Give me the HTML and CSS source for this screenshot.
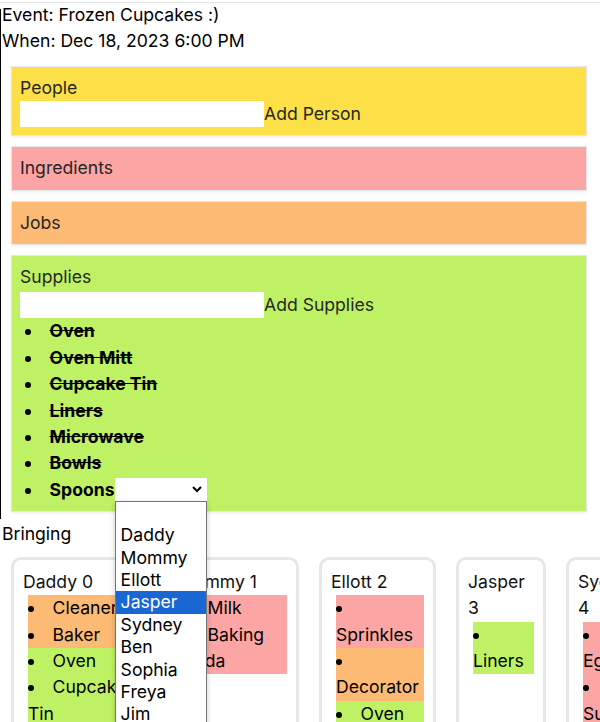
FILE: index.html
```html
<!DOCTYPE html>
<html lang="en">
<head>
<meta charset="utf-8">
<title>Frozen Cupcakes</title>
<link rel="stylesheet" href="styles.css">
</head>
<body>
<div class="topline"></div>
<main class="app">
  <div class="event">
    <div>Event: Frozen Cupcakes :)</div>
    <div>When: Dec 18, 2023 6:00 PM</div>
  </div>

  <div class="panels">
    <section class="panel people">
      <div class="panel-title">People</div>
      <div class="add-row"><input class="text-input" type="text"><button class="add-btn">Add Person</button></div>
    </section>
    <section class="panel ingredients">
      <div class="panel-title">Ingredients</div>
    </section>
    <section class="panel jobs">
      <div class="panel-title">Jobs</div>
    </section>
    <section class="panel supplies">
      <div class="panel-title">Supplies</div>
      <div class="add-row add-row-spaced"><input class="text-input" type="text"><button class="add-btn">Add Supplies</button></div>
      <ul class="supply-list">
        <li class="done">Oven</li>
        <li class="done">Oven Mitt</li>
        <li class="done">Cupcake Tin</li>
        <li class="done">Liners</li>
        <li class="done">Microwave</li>
        <li class="done">Bowls</li>
        <li>Spoons<span class="select"><svg class="chev" width="10" height="7" viewBox="0 0 10 7"><polyline points="1,1 5,5 9,1" fill="none" stroke="#000" stroke-width="2"/></svg><div class="popup">
            <div class="opt"></div>
            <div class="opt">Daddy</div>
            <div class="opt">Mommy</div>
            <div class="opt">Ellott</div>
            <div class="opt active">Jasper</div>
            <div class="opt">Sydney</div>
            <div class="opt">Ben</div>
            <div class="opt">Sophia</div>
            <div class="opt">Freya</div>
            <div class="opt">Jim</div>
          </div></span></li>
      </ul>
    </section>
  </div>

  <div class="bringing">Bringing</div>

  <div class="people-row">
    <div class="person">
      <div class="person-name">Daddy 0</div>
      <ul class="items">
        <li class="job">Cleaner</li>
        <li class="job">Baker</li>
        <li class="supply">Oven</li>
        <li class="supply">Cupcake Tin</li>
      </ul>
    </div>
    <div class="person">
      <div class="person-name">Mommy 1</div>
      <ul class="items">
        <li class="ingredient">Milk</li>
        <li class="ingredient">Baking Soda</li>
      </ul>
    </div>
    <div class="person">
      <div class="person-name">Ellott 2</div>
      <ul class="items">
        <li class="ingredient">Sprinkles</li>
        <li class="job">Decorator</li>
        <li class="supply">Oven</li>
      </ul>
    </div>
    <div class="person">
      <div class="person-name">Jasper 3</div>
      <ul class="items">
        <li class="supply">Liners</li>
      </ul>
    </div>
    <div class="person">
      <div class="person-name">Sydney 4</div>
      <ul class="items">
        <li class="ingredient">Eggs</li>
        <li class="ingredient">Sugar</li>
      </ul>
    </div>
  </div>
</main>
</body>
</html>
```

FILE: styles.css
```css
html, body {
  margin: 0;
  padding: 0;
  background: #fff;
}
body {
  font-family: Inter, "Noto Sans", sans-serif;
  font-size: 17.6px;
  line-height: 26.4px;
  color: #000;
  overflow: hidden;
}
.topline {
  margin-top: 2px;
  height: 1px;
  background: #e3e3e3;
}
.app {
  position: relative;
  padding-left: 2px;
}
.app::before {
  content: "";
  position: absolute;
  left: 0;
  top: 7px;
  height: 510px;
  width: 1px;
  background: #000;
}
.event {
  margin-top: -1px;
}
.panels {
  display: flex;
  flex-direction: column;
  gap: 10px;
  margin: 11px 13px 0 9px;
}
.panel {
  border: 1px solid #e5e7eb;
  box-shadow: 0 1px 3px rgba(0, 0, 0, 0.08);
  padding: 8px;
  color: #262626;
}
.people { background: #fde047; }
.ingredients { background: #fca5a5; }
.jobs { background: #fdba74; }
.supplies { background: #bef264; }

.add-row {
  display: flex;
  align-items: center;
  height: 26px;
}
.add-row-spaced {
  margin-top: 2px;
}
.text-input {
  width: 244px;
  height: 26px;
  border: none;
  padding: 0;
  margin: 0;
  background: #fff;
  box-sizing: border-box;
}
.add-btn {
  border: none;
  background: none;
  padding: 0;
  margin: 0;
  font: inherit;
  color: #262626;
  line-height: 26px;
}
.supply-list {
  margin: 0;
  padding-left: 5px;
  list-style: disc inside;
  color: #000;
  font-weight: 700;
}
.supply-list li.done {
  text-decoration: line-through;
}
.select {
  position: relative;
  display: inline-flex;
  align-items: center;
  justify-content: flex-end;
  width: 92px;
  height: 23px;
  vertical-align: top;
  margin-top: 1px;
  background: #fff;
  box-sizing: border-box;
  padding-right: 5px;
}
.popup {
  position: absolute;
  z-index: 10;
  left: 0;
  top: 100%;
  width: 92px;
  box-sizing: border-box;
  border: 1px solid #767676;
  background: #fff;
  box-shadow: 0 2px 6px rgba(0, 0, 0, 0.2);
  font-weight: 400;
  text-decoration: none;
}
.opt {
  height: 22.4px;
  line-height: 22.4px;
  padding-left: 5px;
  color: #000;
}
.opt.active {
  background: #1967d2;
  color: #fff;
}
.bringing {
  margin-top: 9px;
}
.people-row {
  display: grid;
  grid-template-columns: 135px 133px 117px 90px 90px;
  gap: 20px;
  margin: 9px 0 0 9px;
  align-items: start;
}
.person {
  border: 3px solid #e5e7eb;
  border-radius: 10px;
  padding: 9px;
  min-height: 200px;
  background: #fff;
}
.person-name {
  color: #111;
}
.items {
  list-style: disc inside;
  margin: 0;
  padding: 0 0 0 5px;
}
.items li.ingredient { background: #fca5a5; }
.items li.job { background: #fdba74; }
.items li.supply { background: #bef264; }
```
